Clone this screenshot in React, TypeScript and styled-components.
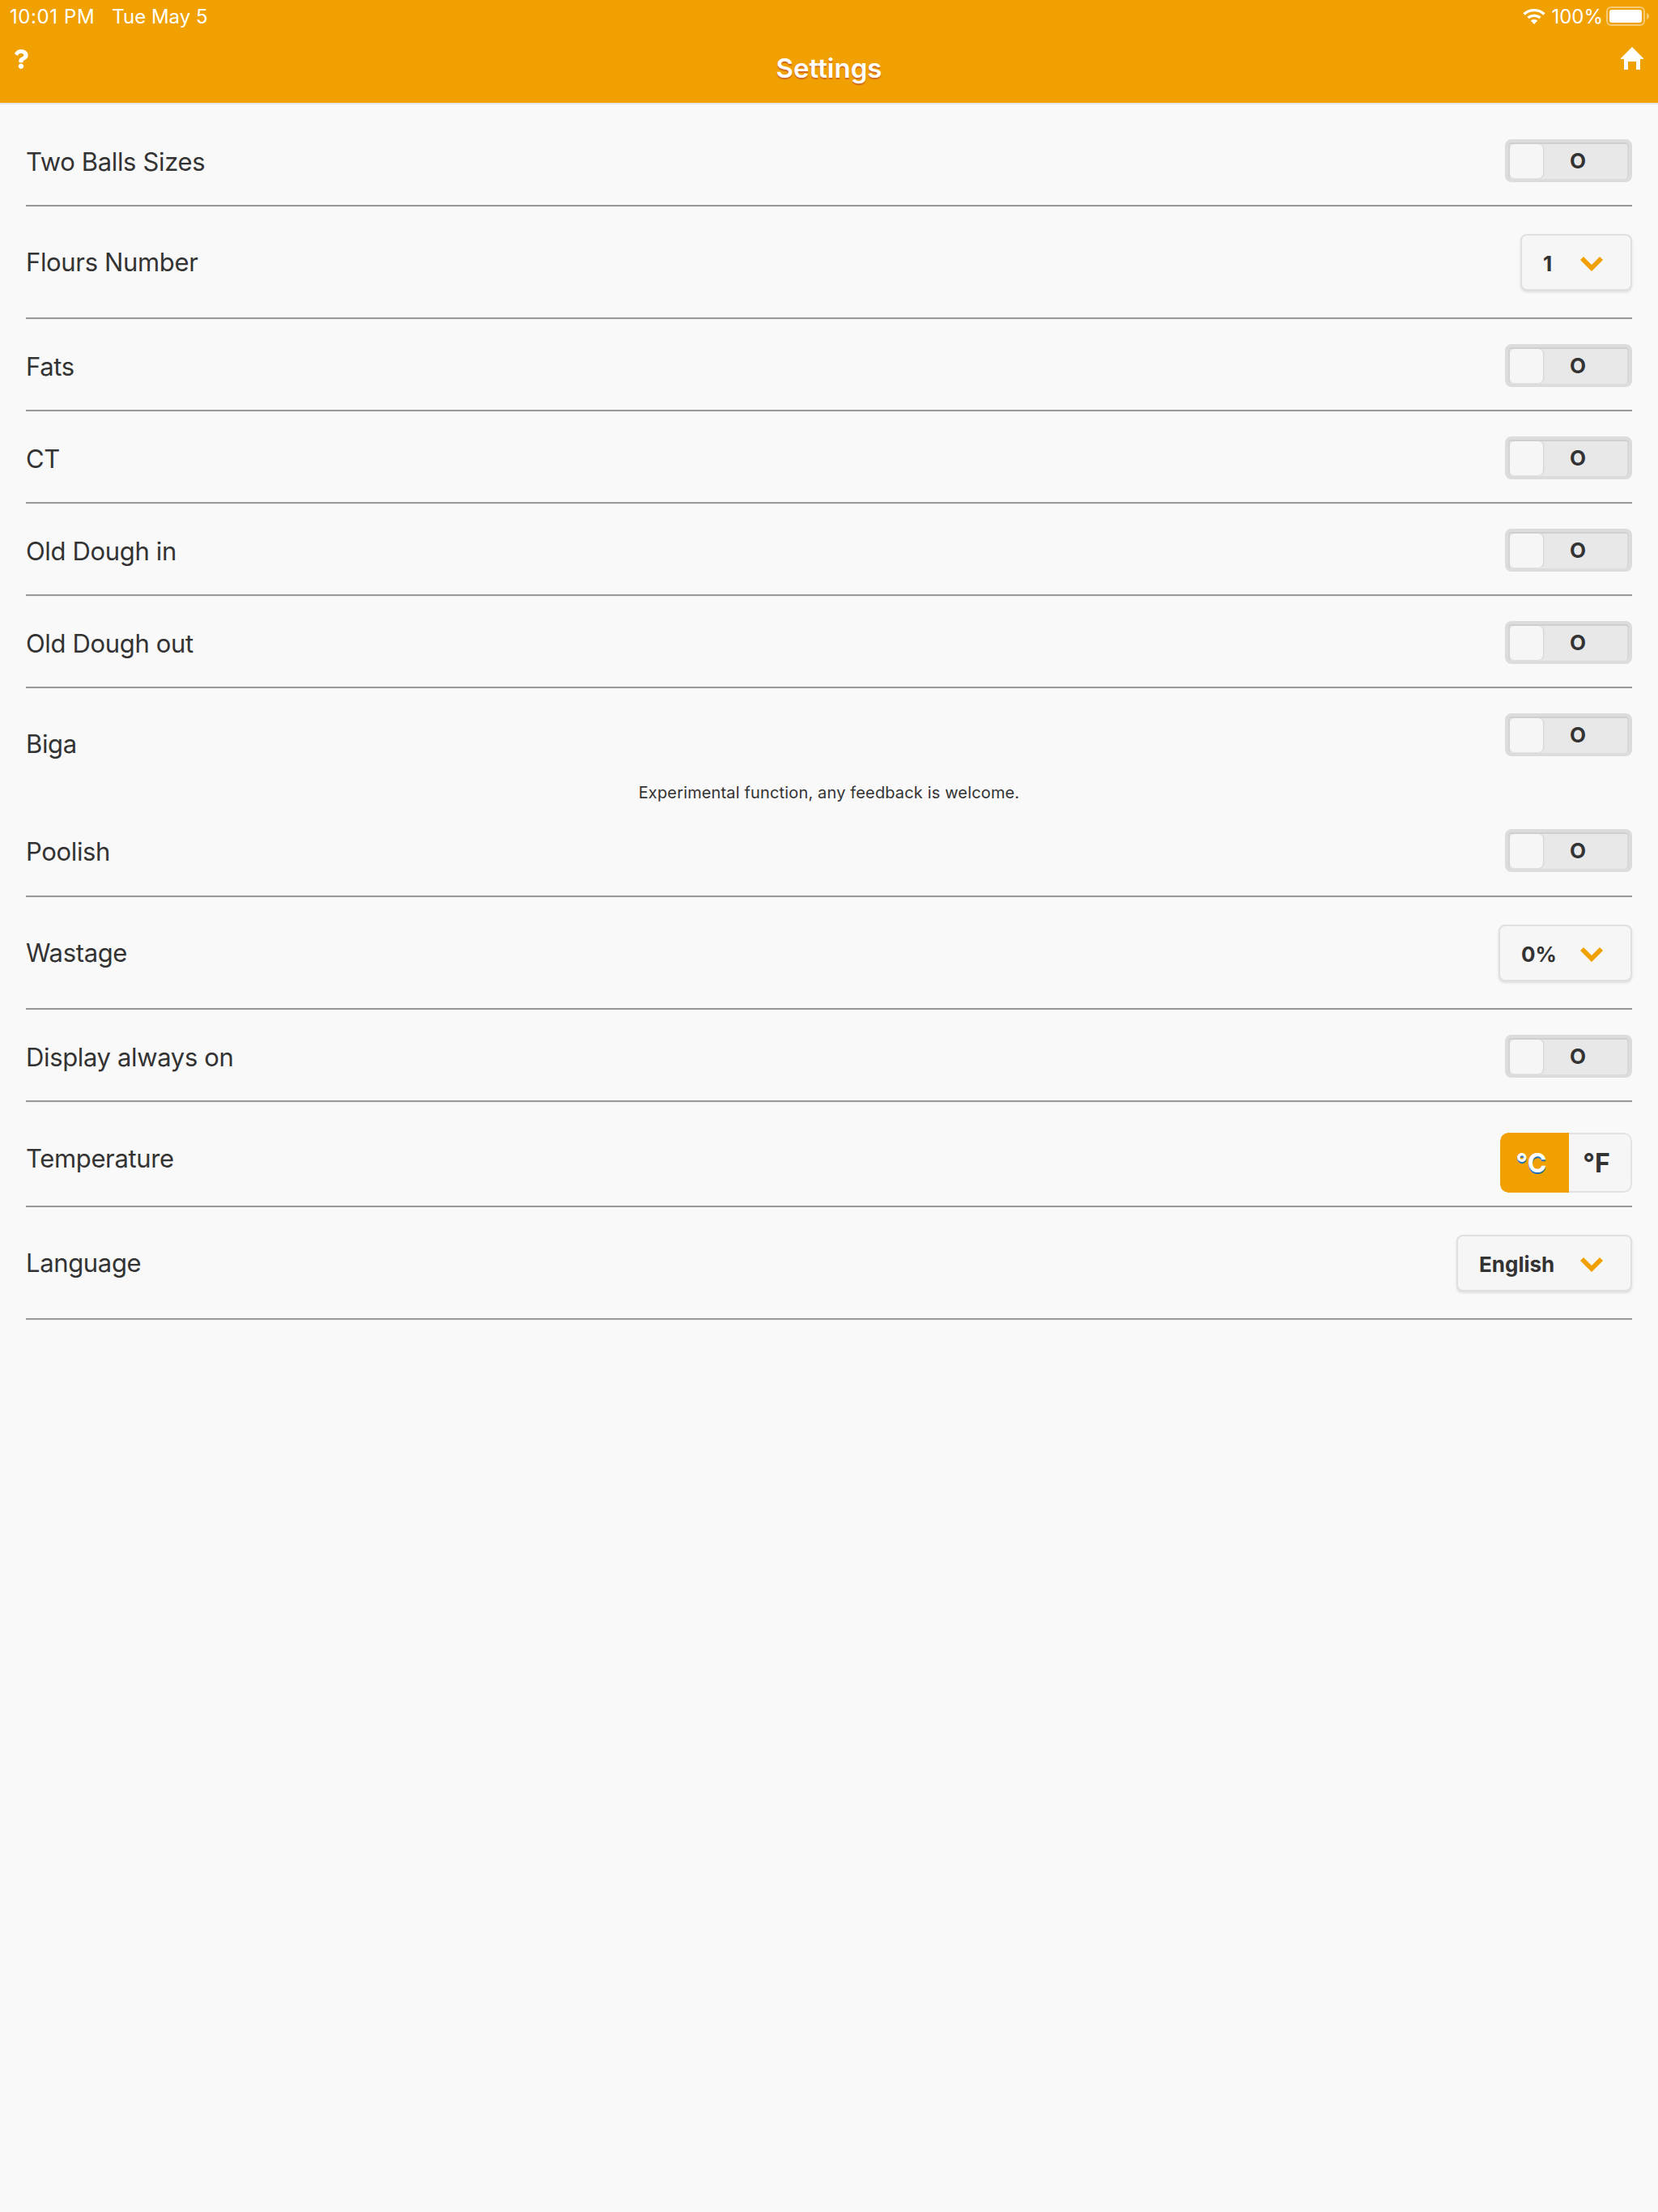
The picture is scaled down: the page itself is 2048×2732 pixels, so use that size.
import React from 'react';
import styled, { createGlobalStyle } from 'styled-components';
import { FaQuestion } from 'react-icons/fa';

const Global = createGlobalStyle`
  html, body { margin: 0; padding: 0; background: #f9f9f9; }
  body { font-family: Inter, "Liberation Sans", sans-serif; color: #333; }
  #root { min-height: 2732px; background: #f9f9f9; }
`;
const Header = styled.header`
  height: 127px; background: #f0a000; color: #fff; border-bottom: 2px solid #e6e6e6;
  display: flex; flex-direction: column;
`;
const StatusBar = styled.div`
  height: 40px; padding: 0 10px 0 12px; display: flex; align-items: center; justify-content: space-between;
  font-size: 24px; font-weight: 400;
`;
const StatusGroup = styled.div`display: flex; align-items: center; gap: ${p => p.$gap}px;`;
const StatusTime = styled.span`letter-spacing: .6px;`;
const WifiSlot = styled.span`display: flex; margin-right: 3px;`;
const NavBar = styled.div`
  flex: 1; display: flex; align-items: flex-start; justify-content: space-between; padding: 18px 18px 0 14px; position: relative;
`;
const Question = styled(FaQuestion)`margin-top: 3px;`;
const Title = styled.h1`
  position: absolute; left: 0; right: 0; top: 25px; margin: 0; text-align: center;
  font-size: 33px; line-height: 38px; font-weight: 600; text-shadow: 0 2px 1px #d2691e;
`;
const List = styled.main`padding: 0 32px;`;
const Row = styled.section`
  display: flex; align-items: center; justify-content: space-between;
  padding: ${p => p.$top}px 0 ${p => p.$bottom}px;
  border-bottom: ${p => p.$plain ? 0 : '2px solid #999'};
  box-shadow: ${p => p.$plain ? 'none' : '0 1px 0 #f0f0f0'};
`;
const Label = styled.span`
  font-size: 31px; letter-spacing: -.35px; line-height: 40px; color: #333;
  margin: ${p => p.$shift}px 0 ${p => -p.$shift}px;
`;
const Note = styled.p`margin: 0; text-align: center; font-size: 20px; line-height: 24px; color: #333; letter-spacing: .15px;`;
const Toggle = styled.div`
  box-sizing: border-box; width: 157px; height: 53px; border: 4px solid #dcdcdc; border-radius: 8px; background: #e8e8e8;
  box-shadow: inset 0 2px 0 #cfcfcf, inset 2px 0 0 #d4d4d4, inset -2px 0 0 #d8d8d8;
  display: flex; align-items: center; padding: 1px 2px;
`;
const Knob = styled.div`width: 41px; height: 42px; border-radius: 6px; background: #f6f6f6; box-shadow: 1px 0 2px #d0d0d0;`;
const ToggleText = styled.span`flex: 1; text-align: center; font-size: 26px; font-weight: 700; color: #333; padding: 0 18px 1px 0;`;
const Select = styled.div`
  box-sizing: border-box; width: ${p => p.$w}px; height: 70px; display: flex; align-items: center; justify-content: space-between;
  padding: 3px 34px 0 26px; border: 2px solid #e0e0e0; border-radius: 8px; background: #f6f6f6;
  box-shadow: 0 2px 3px #ddd; font-size: 26px; font-weight: 700; color: #333;
`;
const Segment = styled.div`
  box-sizing: border-box; width: 163px; height: 74px; display: flex; border-radius: 10px; overflow: hidden; background: #f6f6f6;
`;
const SegmentItem = styled.div`
  flex: ${p => p.$on ? '0 0 85px' : 1}; display: flex; align-items: center; justify-content: center;
  padding-right: 8px;
  font-size: 32px; font-weight: 700; box-sizing: border-box;
  background: ${p => p.$on ? '#f0a000' : '#f6f6f6'}; color: ${p => p.$on ? '#fff' : '#333'};
  text-shadow: ${p => p.$on ? '0 2px 0 #1b6fb0' : 'none'};
  border: ${p => p.$on ? '0' : '2px solid #e2e2e2'}; border-left: 0;
  border-radius: ${p => p.$on ? '10px 0 0 10px' : '0 10px 10px 0'};
`;

const Wifi = () => (
  <svg width="28" height="20" viewBox="0 0 28 20" fill="none" stroke="#fff" strokeWidth="3.4">
    <path d="M1.500 7.500C8.500 1 19.500 1 26.500 7.500" /><path d="M6.500 12C10.500 8.500 17.500 8.500 21.500 12" />
    <path d="M14 20L9.800 15.600C12 13.600 16 13.600 18.200 15.600Z" fill="#fff" stroke="none" />
  </svg>
);
const Battery = () => (
  <svg width="54" height="24" viewBox="0 0 54 24">
    <rect x="1" y="1" width="46" height="22" rx="5" fill="none" stroke="#fff" strokeOpacity=".45" strokeWidth="2" />
    <rect x="4" y="4" width="40" height="16" rx="3" fill="#fff" />
    <path d="M50 8c2 1 3 2.500 3 4s-1 3-3 4z" fill="#fff" fillOpacity=".45" />
  </svg>
);
const Home = () => (
  <svg width="28" height="28" viewBox="0 0 28 28" fill="#fff">
    <path d="M14 0L28 14V15H24V28H19V18H9V28H4V15H0V14Z" />
  </svg>
);
const Chevron = () => (
  <svg width="28" height="18" viewBox="0 0 28 18" fill="#f0a000">
    <polygon points="0,4 4,0 14,10 24,0 28,4 14,18" />
  </svg>
);
const ToggleOff = () => <Toggle><Knob /><ToggleText>O</ToggleText></Toggle>;
const Dropdown = ({ w, value }: { w: number; value: string }) => (
  <Select $w={w}><span>{value}</span><Chevron /></Select>
);

export default function App() {
  return (
    <>
      <Global />
      <Header>
        <StatusBar>
          <StatusGroup $gap={21}><StatusTime>10:01 PM</StatusTime><span>Tue May 5</span></StatusGroup>
          <StatusGroup $gap={4}><WifiSlot><Wifi /></WifiSlot><span>100%</span><Battery /></StatusGroup>
        </StatusBar>
        <NavBar>
          <Question size={24} />
          <Title>Settings</Title>
          <Home />
        </NavBar>
      </Header>
      <List>
        <Row $top={43} $bottom={28}><Label $shift={1}>Two Balls Sizes</Label><ToggleOff /></Row>
        <Row $top={34} $bottom={33}><Label $shift={0}>Flours Number</Label><Dropdown w={138} value="1" /></Row>
        <Row $top={31} $bottom={28}><Label $shift={1}>Fats</Label><ToggleOff /></Row>
        <Row $top={31} $bottom={28}><Label $shift={1}>CT</Label><ToggleOff /></Row>
        <Row $top={31} $bottom={28}><Label $shift={1}>Old Dough in</Label><ToggleOff /></Row>
        <Row $top={31} $bottom={28}><Label $shift={1}>Old Dough out</Label><ToggleOff /></Row>
        <Row $top={31} $bottom={33} $plain><Label $shift={11}>Biga</Label><ToggleOff /></Row>
        <Note>Experimental function, any feedback is welcome.</Note>
        <Row $top={33} $bottom={29}><Label $shift={1}>Poolish</Label><ToggleOff /></Row>
        <Row $top={34} $bottom={33}><Label $shift={0}>Wastage</Label><Dropdown w={165} value="0%" /></Row>
        <Row $top={31} $bottom={28}><Label $shift={1}>Display always on</Label><ToggleOff /></Row>
        <Row $top={38} $bottom={16}><Label $shift={-5}>Temperature</Label><Segment><SegmentItem $on>°C</SegmentItem><SegmentItem>°F</SegmentItem></Segment></Row>
        <Row $top={34} $bottom={33}><Label $shift={0}>Language</Label><Dropdown w={217} value="English" /></Row>
      </List>
    </>
  );
}
